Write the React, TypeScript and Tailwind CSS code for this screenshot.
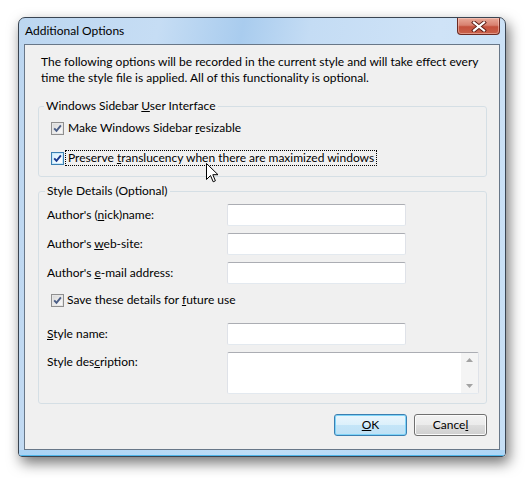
import React from "react";

const font = { fontFamily: 'Lato, "Noto Sans", sans-serif' };

function Check({ focused }: { focused?: boolean }) {
  return (
    <span
      className={
        "w-[13px] h-[13px] border flex items-center justify-center shrink-0 " +
        (focused ? "border-[#3c7fb1] bg-[#f4fbff]" : "border-[#8f8f8f] bg-[#f4f4f4]")
      }
    >
      <span
        className={
          "w-[11px] h-[11px] border flex items-center justify-center " +
          (focused
            ? "border-[#c6e9fc] bg-gradient-to-br from-[#d8effc] to-[#ffffff]"
            : "border-[#e6e6e6] bg-gradient-to-br from-[#d9d9d9] to-[#fafafa]")
        }
      >
        <svg width="9" height="9" viewBox="0 0 9 9">
          <path
            d="M1.2 4.4 L3.5 6.9 L7.9 1.3"
            stroke={focused ? "#1b3a8f" : "#4b5e86"}
            strokeWidth="1.9"
            fill="none"
          />
        </svg>
      </span>
    </span>
  );
}

function TextBox() {
  return (
    <div className="w-[179px] h-[22px] bg-white border border-t-[#abadb3] border-x-[#dfe2e8] border-b-[#e3e9ef] rounded-[2px]" />
  );
}

function Button({ children, def }: { children: React.ReactNode; def?: boolean }) {
  return (
    <div
      className={
        "w-[73px] h-[22px] rounded-[3px] border flex items-center justify-center text-[12px] leading-[14px] text-black " +
        (def
          ? "border-[#3c7fb1] shadow-[inset_0_0_0_1px_#7fd4f8] bg-[linear-gradient(#eaf6fd_0%,#dcf0fb_50%,#c4e5f8_51%,#bfe1f5_100%)]"
          : "border-[#707070] shadow-[inset_0_0_0_1px_#fbfbfb] bg-[linear-gradient(#f2f2f2_0%,#ebebeb_50%,#dddddd_51%,#cfcfcf_100%)]")
      }
    >
      {children}
    </div>
  );
}

export default function App() {
  return (
    <div className="w-[525px] h-[478px] bg-white relative pt-[17px] pl-[18px] text-[12px] text-black" style={font}>
      <div className="w-[488px] h-[440px] rounded-t-[7px] rounded-b-[4px] border border-[#3a4552] shadow-[3px_6px_14px_rgba(0,0,0,0.55)] bg-[linear-gradient(100deg,#bcd6f0_0%,#c6ddf4_25%,#a9ccee_40%,#c4dcf4_52%,#cfe3f7_75%,#c7dff5_100%)] flex flex-col overflow-hidden">
        {/* title bar */}
        <div className="h-[26px] flex justify-between shrink-0">
          <div className="self-center pl-[6px] leading-[16px] text-black">Additional Options</div>
          <div className="mr-[5px] w-[43px] h-[17px] rounded-b-[4px] border border-t-0 border-[#6b2a22] bg-[linear-gradient(#e9a998_0%,#d88170_45%,#c4503c_55%,#c9614a_100%)] shadow-[inset_0_0_0_1px_rgba(255,220,210,0.45)] flex items-center justify-center">
            <svg width="16" height="11" viewBox="0 0 16 11">
              <path d="M3 1.5 L13 9.5 M13 1.5 L3 9.5" stroke="#5a1d16" strokeWidth="4" strokeLinecap="square" />
              <path d="M3 1.5 L13 9.5 M13 1.5 L3 9.5" stroke="#ffffff" strokeWidth="2.2" strokeLinecap="square" />
            </svg>
          </div>
        </div>
        {/* client area */}
        <div className="mx-[5px] h-[406px] border border-[#687788] bg-[#f0f0f0] flex flex-col shrink-0">
          <p className="mt-[9px] ml-[16px] leading-[16px] whitespace-nowrap">
            The following options will be recorded in the current style and will take effect every
            <br />
            time the style file is applied. All of this functionality is optional.
          </p>

          <fieldset className="mt-[12px] ml-[13px] mr-[12px] h-[79px] border border-[#d5dfe5] rounded-[3px]">
            <legend className="ml-[5px] px-[2px] leading-[16px]">
              Windows Sidebar <u>U</u>ser Interface
            </legend>
            <div className="flex flex-col pl-[12px]">
              <div className="mt-[5px] h-[18px] flex items-center">
                <Check />
                <span className="ml-[1px] px-[2px] border border-transparent leading-[14px]">
                  Make Windows Sidebar <u>r</u>esizable
                </span>
              </div>
              <div className="mt-[12px] h-[18px] flex items-center">
                <Check focused />
                <span className="ml-[1px] px-[2px] border border-dotted border-black leading-[14px]">
                  Preserve <u>t</u>ranslucency when there are maximized windows
                </span>
              </div>
            </div>
          </fieldset>

          <fieldset className="mt-[6px] ml-[13px] mr-[12px] h-[221px] border border-[#d5dfe5] rounded-[3px]">
            <legend className="ml-[6px] px-[2px] leading-[16px]">Style Details (Optional)</legend>
            <div className="flex flex-col pl-[8px]">
              <div className="mt-[5px] h-[22px] flex items-center">
                <span className="w-[180px]">
                  Author's (<u>n</u>ick)name:
                </span>
                <TextBox />
              </div>
              <div className="mt-[7px] h-[22px] flex items-center">
                <span className="w-[180px]">
                  Author's <u>w</u>eb-site:
                </span>
                <TextBox />
              </div>
              <div className="mt-[7px] h-[22px] flex items-center">
                <span className="w-[180px]">
                  Author's <u>e</u>-mail address:
                </span>
                <TextBox />
              </div>
              <div className="mt-[7px] h-[18px] flex items-center pl-[4px]">
                <Check />
                <span className="ml-[1px] px-[1px] border border-transparent leading-[14px]">
                  Save these details for <u>f</u>uture use
                </span>
              </div>
              <div className="mt-[14px] h-[22px] flex items-center">
                <span className="w-[180px]">
                  <u>S</u>tyle name:
                </span>
                <TextBox />
              </div>
              <div className="mt-[7px] flex items-start">
                <span className="w-[180px] pt-[2px] leading-[16px]">
                  Style des<u>c</u>ription:
                </span>
                <div className="w-[252px] h-[42px] bg-white border border-t-[#abadb3] border-x-[#dfe2e8] border-b-[#e3e9ef] rounded-[2px] flex justify-end">
                  <div className="w-[17px] h-full bg-[#f4f4f4] flex flex-col items-center justify-between py-[5px]">
                    <svg width="7" height="4" viewBox="0 0 7 4">
                      <path d="M0 4 L3.5 0 L7 4 Z" fill="#a3a3a3" />
                    </svg>
                    <svg width="7" height="4" viewBox="0 0 7 4">
                      <path d="M0 0 L3.5 4 L7 0 Z" fill="#a3a3a3" />
                    </svg>
                  </div>
                </div>
              </div>
            </div>
          </fieldset>

          <div className="mt-[10px] mr-[12px] flex justify-end gap-[7px]">
            <Button def>
              <span>
                <u>O</u>K
              </span>
            </Button>
            <Button>
              <span>
                Cance<u>l</u>
              </span>
            </Button>
          </div>
        </div>
        <div className="flex-1 border-b border-b-[#4fb6ea] bg-[linear-gradient(90deg,#a9d3f5,#bfdef7,#aed6f6)]" />
      </div>

      {/* mouse cursor */}
      <svg className="absolute left-[206px] top-[163px]" width="13" height="20" viewBox="0 0 13 20">
        <path d="M0.5 0.5 L0.5 16.5 L4.5 12.5 L7.2 18.8 L9.4 17.8 L6.8 11.7 L12 11.7 Z" fill="#ffffff" stroke="#000000" strokeWidth="1" strokeLinejoin="miter" />
      </svg>
    </div>
  );
}
